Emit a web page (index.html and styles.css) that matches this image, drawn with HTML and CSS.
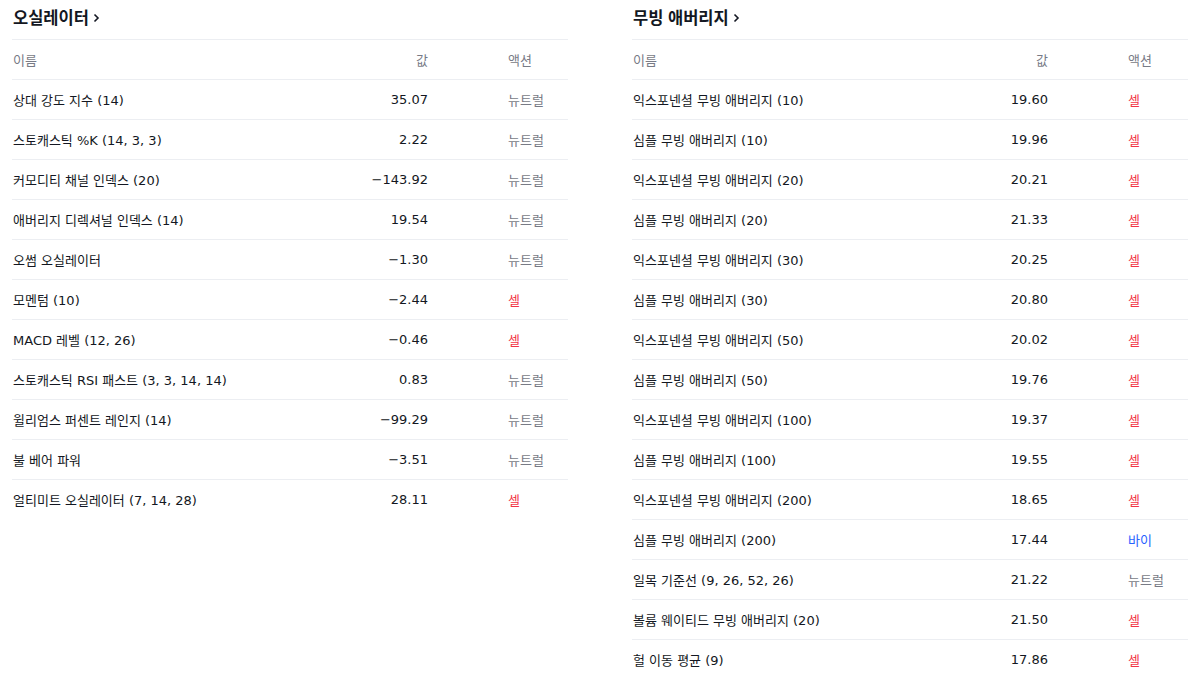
FILE: index.html
```html
<!DOCTYPE html>
<html lang="ko">
<head>
<meta charset="utf-8">
<link rel="stylesheet" href="styles.css">
</head>
<body>
<div class="page">
  <section class="panel">
    <h2 class="title">오실레이터 <svg class="chev" width="7" height="10" viewBox="0 0 7 10"><path d="M1.5 1.5 L5 5 L1.5 8.5" fill="none" stroke="#131722" stroke-width="1.6"/></svg></h2>
    <div class="row head"><span>이름</span><span class="val">값</span><span class="act">액션</span></div>
    <div class="row"><span>상대 강도 지수 (14)</span><span class="val">35.07</span><span class="act neutral">뉴트럴</span></div>
    <div class="row"><span>스토캐스틱 %K (14, 3, 3)</span><span class="val">2.22</span><span class="act neutral">뉴트럴</span></div>
    <div class="row"><span>커모디티 채널 인덱스 (20)</span><span class="val">−143.92</span><span class="act neutral">뉴트럴</span></div>
    <div class="row"><span>애버리지 디렉셔널 인덱스 (14)</span><span class="val">19.54</span><span class="act neutral">뉴트럴</span></div>
    <div class="row"><span>오썸 오실레이터</span><span class="val">−1.30</span><span class="act neutral">뉴트럴</span></div>
    <div class="row"><span>모멘텀 (10)</span><span class="val">−2.44</span><span class="act sell">셀</span></div>
    <div class="row"><span>MACD 레벨 (12, 26)</span><span class="val">−0.46</span><span class="act sell">셀</span></div>
    <div class="row"><span>스토캐스틱 RSI 패스트 (3, 3, 14, 14)</span><span class="val">0.83</span><span class="act neutral">뉴트럴</span></div>
    <div class="row"><span>윌리엄스 퍼센트 레인지 (14)</span><span class="val">−99.29</span><span class="act neutral">뉴트럴</span></div>
    <div class="row"><span>불 베어 파워</span><span class="val">−3.51</span><span class="act neutral">뉴트럴</span></div>
    <div class="row"><span>얼티미트 오실레이터 (7, 14, 28)</span><span class="val">28.11</span><span class="act sell">셀</span></div>
  </section>
  <section class="panel">
    <h2 class="title">무빙 애버리지 <svg class="chev" width="7" height="10" viewBox="0 0 7 10"><path d="M1.5 1.5 L5 5 L1.5 8.5" fill="none" stroke="#131722" stroke-width="1.6"/></svg></h2>
    <div class="row head"><span>이름</span><span class="val">값</span><span class="act">액션</span></div>
    <div class="row"><span>익스포넨셜 무빙 애버리지 (10)</span><span class="val">19.60</span><span class="act sell">셀</span></div>
    <div class="row"><span>심플 무빙 애버리지 (10)</span><span class="val">19.96</span><span class="act sell">셀</span></div>
    <div class="row"><span>익스포넨셜 무빙 애버리지 (20)</span><span class="val">20.21</span><span class="act sell">셀</span></div>
    <div class="row"><span>심플 무빙 애버리지 (20)</span><span class="val">21.33</span><span class="act sell">셀</span></div>
    <div class="row"><span>익스포넨셜 무빙 애버리지 (30)</span><span class="val">20.25</span><span class="act sell">셀</span></div>
    <div class="row"><span>심플 무빙 애버리지 (30)</span><span class="val">20.80</span><span class="act sell">셀</span></div>
    <div class="row"><span>익스포넨셜 무빙 애버리지 (50)</span><span class="val">20.02</span><span class="act sell">셀</span></div>
    <div class="row"><span>심플 무빙 애버리지 (50)</span><span class="val">19.76</span><span class="act sell">셀</span></div>
    <div class="row"><span>익스포넨셜 무빙 애버리지 (100)</span><span class="val">19.37</span><span class="act sell">셀</span></div>
    <div class="row"><span>심플 무빙 애버리지 (100)</span><span class="val">19.55</span><span class="act sell">셀</span></div>
    <div class="row"><span>익스포넨셜 무빙 애버리지 (200)</span><span class="val">18.65</span><span class="act sell">셀</span></div>
    <div class="row"><span>심플 무빙 애버리지 (200)</span><span class="val">17.44</span><span class="act buy">바이</span></div>
    <div class="row"><span>일목 기준선 (9, 26, 52, 26)</span><span class="val">21.22</span><span class="act neutral">뉴트럴</span></div>
    <div class="row"><span>볼륨 웨이티드 무빙 애버리지 (20)</span><span class="val">21.50</span><span class="act sell">셀</span></div>
    <div class="row"><span>헐 이동 평균 (9)</span><span class="val">17.86</span><span class="act sell">셀</span></div>
  </section>
</div>
</body>
</html>
```
FILE: styles.css
```css
html, body {
  margin: 0;
  padding: 0;
  background: #ffffff;
}
body {
  font-family: "DejaVu Sans", "Noto Sans CJK KR", sans-serif;
  font-size: 13px;
  color: #131722;
}
.page {
  display: flex;
  gap: 64px;
  padding: 0 11px 0 12px;
}
.panel {
  width: 556px;
  flex: none;
}
.title {
  margin: 0;
  padding: 7px 0 12px 1px;
  height: 20px;
  line-height: 20px;
  font-family: "Noto Sans CJK KR", sans-serif;
  font-size: 16.5px;
  font-weight: 700;
  border-bottom: 1px solid #eceef2;
  display: flex;
  align-items: center;
}
.chev {
  margin-left: 4px;
  margin-top: 2px;
}
.row {
  display: grid;
  grid-template-columns: 1fr 100px 140px;
  align-items: center;
  height: 39px;
  padding-left: 1px;
  border-bottom: 1px solid #eceef2;
}
.row:last-child {
  border-bottom: none;
}
.head {
  color: #787b86;
}
.val {
  text-align: right;
}
.act {
  padding-left: 80px;
}
.neutral {
  color: #787b86;
}
.sell {
  color: #f23645;
}
.buy {
  color: #2962ff;
}
```
